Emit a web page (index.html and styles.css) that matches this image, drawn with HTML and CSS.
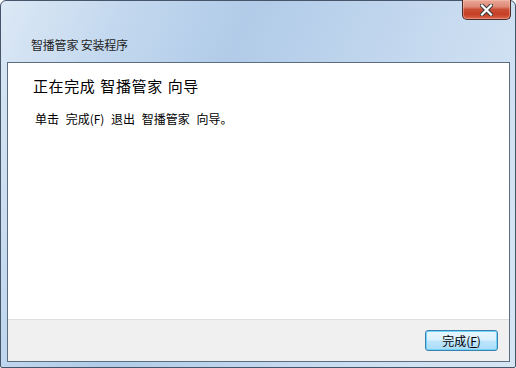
FILE: index.html
```html
<!DOCTYPE html>
<html lang="zh-CN">
<head>
<meta charset="utf-8">
<title>智播管家 安装程序</title>
<link rel="stylesheet" href="styles.css">
</head>
<body>
<div class="window">
  <div class="titlebar">
    <div class="title">智播管家 安装程序</div>
    <div class="close">
      <svg width="13" height="12" viewBox="0 0 13 12">
        <path d="M2 1.5 L11 10.5 M11 1.5 L2 10.5" stroke="#3b3b3b" stroke-width="4.2" stroke-linecap="square" fill="none"/>
        <path d="M2 1.5 L11 10.5 M11 1.5 L2 10.5" stroke="#ffffff" stroke-width="2.2" stroke-linecap="square" fill="none"/>
      </svg>
    </div>
  </div>
  <div class="client">
    <div class="content">
      <h1 class="heading">正在完成 智播管家 向导</h1>
      <p class="message">单击 完成(F) 退出 智播管家 向导。</p>
    </div>
    <div class="footer">
      <button class="btn">完成(<u>F</u>)</button>
    </div>
  </div>
</div>
</body>
</html>
```
FILE: styles.css
```css
html, body {
  margin: 0;
  padding: 0;
  background: #ffffff;
}
body {
  width: 516px;
  height: 368px;
  overflow: hidden;
  font-family: "Noto Sans CJK SC", "Noto Sans", sans-serif;
}
.window {
  box-sizing: border-box;
  width: 516px;
  height: 368px;
  border: 1px solid #46566a;
  border-radius: 6px 6px 2px 2px;
  background:
    linear-gradient(112deg, #dce8f5 0%, #c4d9ef 18%, #b1cbe8 38%, #bfd5ed 58%, #cfe0f2 80%, #d6e5f4 100%);
  display: flex;
  flex-direction: column;
  padding: 0 5px 5px 6px;
}
.titlebar {
  height: 61px;
  display: flex;
  align-items: flex-start;
  flex: none;
}
.title {
  font-size: 12px;
  line-height: 16px;
  color: #1e1e1e;
  padding-top: 36px;
  padding-left: 24px;
  letter-spacing: -0.2px;
}
.close {
  margin-left: auto;
  margin-right: -1px;
  margin-top: -1px;
  width: 49px;
  height: 20px;
  box-sizing: border-box;
  border: 1px solid #4b2b27;
  border-top: none;
  border-radius: 0 0 5px 5px;
  background: linear-gradient(#e9a797 0%, #dd8a76 35%, #cc4d35 50%, #c53f26 75%, #d9664a 100%);
  box-shadow: inset 0 0 0 1px rgba(255, 200, 185, 0.45);
  display: flex;
  align-items: center;
  justify-content: center;
}
.close svg {
  display: block;
}
.client {
  flex: 1;
  border: 1px solid #5d6d80;
  background: #ffffff;
  display: flex;
  flex-direction: column;
}
.content {
  flex: 1;
  padding: 13px 25px 0 25px;
}
.heading {
  margin: 0;
  font-weight: normal;
  font-size: 15px;
  line-height: 20px;
  color: #000000;
  letter-spacing: 0.6px;
  word-spacing: 1px;
}
.message {
  margin: 15px 0 0 2px;
  font-size: 12px;
  line-height: 16px;
  color: #000000;
  word-spacing: 4px;
}
.footer {
  height: 42px;
  flex: none;
  background: #f0f0f0;
  border-top: 1px solid #dfdfdf;
  display: flex;
  justify-content: flex-end;
  align-items: flex-start;
  padding: 10px 11px 0 0;
  box-sizing: border-box;
}
.btn {
  width: 73px;
  height: 21px;
  box-sizing: border-box;
  border: 1px solid #3c7fb1;
  border-radius: 3px;
  background: linear-gradient(#e8f6fd 0%, #d9f0fc 48%, #bee6fd 52%, #a9dbf6 100%);
  box-shadow: inset 0 0 0 1px #6fd5f9;
  font-family: "Noto Sans CJK SC", "Noto Sans", sans-serif;
  font-size: 12px;
  line-height: 17px;
  color: #000000;
  padding: 0;
}
.btn u {
  text-decoration: underline;
}
```
